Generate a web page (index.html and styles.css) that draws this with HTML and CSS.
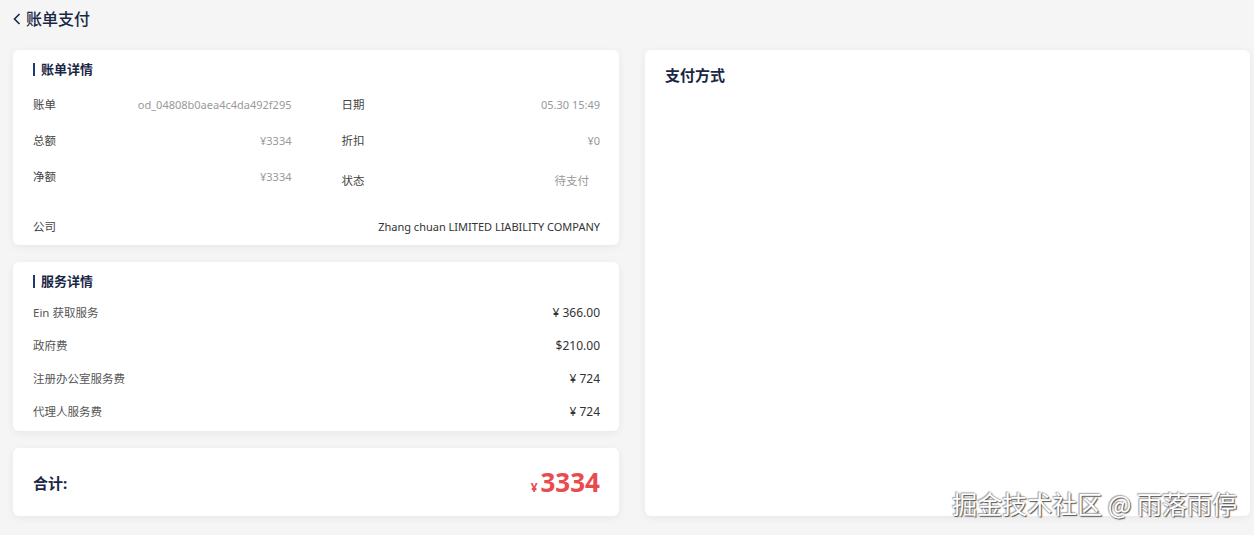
FILE: index.html
```html
<!DOCTYPE html>
<html lang="zh">
<head>
    <meta charset="UTF-8">
    <meta name="viewport" content="width=device-width, initial-scale=1.0">
    <title>账单支付</title>
    <link rel="stylesheet" href="styles.css">
</head>
<body>
<div class="header">
    <svg class="back-icon" width="10" height="12" viewBox="0 0 10 12"><path d="M7.5 1 L2.5 6 L7.5 11" fill="none" stroke="#1a2744" stroke-width="1.6"/></svg>
    <h1>账单支付</h1>
</div>

<div class="layout">
    <div class="left-col">
        <div class="card bill-card">
            <h2 class="card-title">账单详情</h2>
            <div class="bill-row">
                <div class="bill-item"><span class="label">账单</span><span class="value">od_04808b0aea4c4da492f295</span></div>
                <div class="bill-item"><span class="label">日期</span><span class="value">05.30 15:49</span></div>
            </div>
            <div class="bill-row">
                <div class="bill-item"><span class="label">总额</span><span class="value">¥3334</span></div>
                <div class="bill-item"><span class="label">折扣</span><span class="value">¥0</span></div>
            </div>
            <div class="bill-row tall">
                <div class="bill-item"><span class="label">净额</span><span class="value">¥3334</span></div>
                <div class="bill-item status"><span class="label">状态</span><span class="tag">待支付</span></div>
            </div>
            <div class="bill-row company">
                <span class="label">公司</span><span class="company-name">Zhang chuan LIMITED LIABILITY COMPANY</span>
            </div>
        </div>

        <div class="card service-card">
            <h2 class="card-title">服务详情</h2>
            <div class="service-row"><span>Ein 获取服务</span><span class="price">¥ 366.00</span></div>
            <div class="service-row"><span>政府费</span><span class="price">$210.00</span></div>
            <div class="service-row"><span>注册办公室服务费</span><span class="price">¥ 724</span></div>
            <div class="service-row"><span>代理人服务费</span><span class="price">¥ 724</span></div>
        </div>

        <div class="card total-card">
            <span class="total-label">合计:</span>
            <span class="total-value"><small>¥</small>3334</span>
        </div>
    </div>

    <div class="card pay-card">
        <h2 class="pay-title">支付方式</h2>
    </div>
</div>

<div class="watermark">掘金技术社区 @ 雨落雨停</div>
</body>
</html>
```

FILE: styles.css
```css
body {
    font-family: "Noto Sans", "Noto Sans CJK SC", sans-serif;
    margin: 0;
    padding: 0 4px 0 13px;
    background-color: #f5f5f5;
    color: #333;
    height: 535px;
    box-sizing: border-box;
    overflow: hidden;
}

.header {
    display: flex;
    align-items: center;
    height: 38px;
    margin-left: -1px;
    margin-bottom: 12px;
}
.back-icon {
    margin-right: 4px;
}
.header h1 {
    margin: 0;
    font-size: 16px;
    font-weight: 500;
    color: #1a2744;
    line-height: 22px;
}

.layout {
    display: grid;
    grid-template-columns: 606px 605px;
    column-gap: 26px;
    height: 466px;
}
.left-col {
    display: flex;
    flex-direction: column;
    gap: 17px;
}

.card {
    background: white;
    border-radius: 6px;
    box-shadow: 0 2px 8px rgba(0,0,0,0.06);
    box-sizing: border-box;
}

.card-title {
    margin: 0;
    font-size: 13px;
    font-weight: bold;
    color: #1a2744;
    line-height: 20px;
    display: flex;
    align-items: center;
}
.card-title::before {
    content: "";
    width: 2px;
    height: 13px;
    background-color: #1e3a6e;
    margin-right: 6px;
}

.bill-card {
    height: 195px;
    padding: 9px 19px 0 20px;
}
.bill-card .card-title {
    margin-bottom: 8px;
}
.bill-row {
    display: grid;
    grid-template-columns: 1fr 1fr;
    column-gap: 50px;
    height: 36px;
    font-size: 11.5px;
}
.bill-row.tall {
    height: 48px;
}
.bill-item {
    display: flex;
    justify-content: space-between;
    line-height: 36px;
    height: 36px;
}
.bill-item.status {
    height: 44px;
    line-height: 44px;
}
.label {
    color: #444;
}
.value {
    color: #999;
    font-size: 11px;
}
.tag {
    color: #999;
    padding: 0 11px;
}
.bill-row.company {
    display: flex;
    justify-content: space-between;
    height: 39px;
    line-height: 39px;
}
.company-name {
    color: #333;
    font-size: 11px;
}

.service-card {
    height: 169px;
    padding: 9px 19px 3px 20px;
}
.service-card .card-title {
    margin-bottom: 5px;
}
.service-row {
    display: flex;
    justify-content: space-between;
    height: 33px;
    line-height: 33px;
    font-size: 11.5px;
    color: #555;
}
.price {
    color: #333;
    font-size: 12px;
}

.total-card {
    height: 68px;
    padding: 0 19px 0 20px;
    display: flex;
    justify-content: space-between;
    align-items: center;
}
.total-label {
    font-size: 15px;
    font-weight: bold;
    color: #1a2744;
}
.total-value {
    font-size: 26px;
    font-weight: bold;
    color: #e84c4f;
}
.total-value small {
    font-size: 12px;
    margin-right: 3px;
}

.pay-card {
    padding: 15px 20px;
}
.pay-title {
    margin: 0;
    font-size: 15px;
    font-weight: bold;
    color: #1a2744;
    line-height: 20px;
}

.watermark {
    position: absolute;
    right: 17px;
    top: 487px;
    font-size: 25px;
    line-height: 32px;
    color: #fff;
    font-family: "Noto Sans CJK SC", sans-serif;
    text-shadow: 1px 1px 1px #555, -1px -1px 1px #aaa, 0 0 2px #888;
}
```
